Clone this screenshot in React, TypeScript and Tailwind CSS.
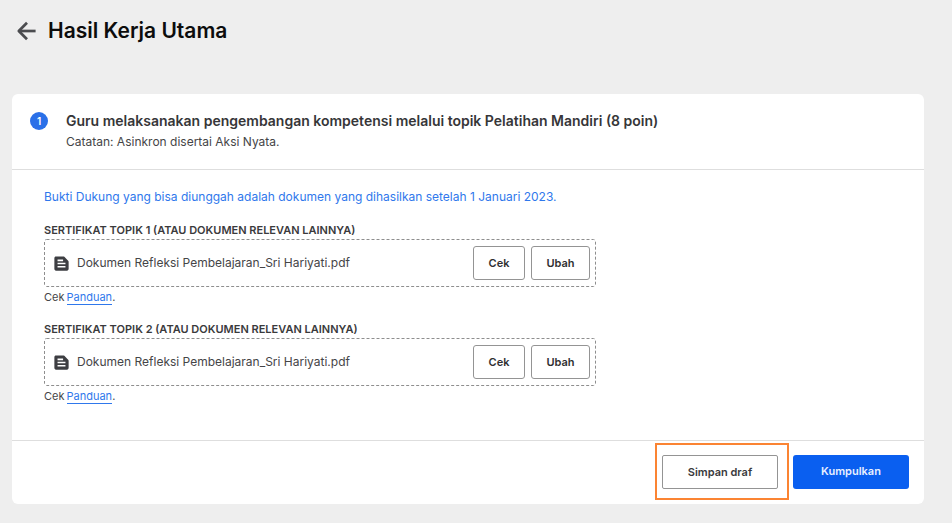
import { MdTextSnippet } from "react-icons/md";

interface Evidence {
  id: number;
  label: string;
  fileName: string;
}

const evidences: Evidence[] = [
  {
    id: 1,
    label: "Sertifikat Topik 1 (atau dokumen relevan lainnya)",
    fileName: "Dokumen Refleksi Pembelajaran_Sri Hariyati.pdf",
  },
  {
    id: 2,
    label: "Sertifikat Topik 2 (atau dokumen relevan lainnya)",
    fileName: "Dokumen Refleksi Pembelajaran_Sri Hariyati.pdf",
  },
];

function BackIcon() {
  return (
    <svg
      viewBox="0 0 20 20"
      className="h-5 w-5"
      fill="none"
      stroke="currentColor"
      strokeWidth="2.7"
      strokeLinejoin="round"
      aria-hidden="true"
    >
      <path d="M19.6 10H3.4" />
      <path d="M11 1.7 2.8 10l8.2 8.3" />
    </svg>
  );
}

// Dashed outline with a tighter dash than the border-dashed utility gives
function DashedOutline() {
  return (
    <svg className="pointer-events-none absolute inset-0 h-full w-full" aria-hidden="true">
      <rect
        x="0.5"
        y="0.5"
        rx="2"
        className="h-[calc(100%-1px)] w-[calc(100%-1px)]"
        fill="none"
        stroke="#8e8e8e"
        strokeDasharray="3 2"
      />
    </svg>
  );
}

function EvidenceField({ evidence }: { evidence: Evidence }) {
  return (
    <section>
      <h3 className="text-[11px] leading-4 font-semibold text-[#3a3a3c] uppercase">
        {evidence.label}
      </h3>
      <div className="relative mt-px flex h-12 items-center gap-1.5 pr-1.5 pl-2">
        <DashedOutline />
        <MdTextSnippet className="h-[19px] w-[19px] shrink-0 text-[#3d3e42]" />
        <span className="min-w-0 flex-1 truncate text-xs leading-5 text-[#454547]">
          {evidence.fileName}
        </span>
        <button
          type="button"
          className="relative h-[34px] w-[52px] rounded-[3px] border border-[#949494] bg-white text-[11px] font-semibold text-[#2f2f31]"
        >
          Cek
        </button>
        <button
          type="button"
          className="relative h-[34px] w-[59px] rounded-[3px] border border-[#949494] bg-white text-[11px] font-semibold text-[#2f2f31]"
        >
          Ubah
        </button>
      </div>
      <p className="mt-1 flex text-[11px] leading-[13px] text-[#454547]">
        <span className="mr-0.5">Cek</span>
        <a href="#panduan" className="border-b border-[#2f78ec] text-[#2f78ec]">
          Panduan
        </a>
        .
      </p>
    </section>
  );
}

export default function App() {
  return (
    <main className="min-h-screen bg-[#eeeeee] pr-7 pb-5 pl-3 font-[Inter,sans-serif]">
      <header className="flex h-[62px] items-center gap-3 pl-1">
        <button type="button" aria-label="Kembali" className="text-[#4b4c4f]">
          <BackIcon />
        </button>
        <h1 className="text-[21px] font-semibold text-[#0c0c0c]">Hasil Kerja Utama</h1>
      </header>

      <article className="mt-8 rounded-md bg-white">
        <div className="flex gap-[18px] border-b border-[#dedede] px-[18px] pt-[17px] pb-[17px]">
          <span className="mt-px flex h-[18px] w-[18px] shrink-0 items-center justify-center rounded-full bg-[#2a70e8] text-[10px] font-semibold text-white">
            1
          </span>
          <div>
            <h2 className="text-sm leading-5 font-semibold text-[#363638]">
              Guru melaksanakan pengembangan kompetensi melalui topik Pelatihan Mandiri (8 poin)
            </h2>
            <p className="mt-px text-xs leading-5 text-[#454547]">
              Catatan: Asinkron disertai Aksi Nyata.
            </p>
          </div>
        </div>

        <div className="px-8 pt-[17px] pb-9">
          <p className="text-xs leading-5 text-[#2f78ec]">
            Bukti Dukung yang bisa diunggah adalah dokumen yang dihasilkan setelah 1 Januari 2023.
          </p>
          <div className="mt-[15px] max-w-[552px] space-y-4">
            {evidences.map((evidence) => (
              <EvidenceField key={evidence.id} evidence={evidence} />
            ))}
          </div>
        </div>

        <footer className="flex items-center justify-end gap-1 border-t border-[#dedede] pt-[2px] pr-[15px] pb-1">
          <div className="border-2 border-[#fb8433] pt-[10px] pr-[9px] pb-[9px] pl-[5px]">
            <button
              type="button"
              className="block h-[34px] w-[116px] rounded-[2px] border border-[#949494] bg-white text-[11px] font-semibold text-[#3a3a3c]"
            >
              Simpan draf
            </button>
          </div>
          <button
            type="button"
            className="h-[34px] w-[116px] rounded-[3px] bg-[#0a5ff0] text-[11px] font-semibold text-[#e8f0ff]"
          >
            Kumpulkan
          </button>
        </footer>
      </article>
    </main>
  );
}
